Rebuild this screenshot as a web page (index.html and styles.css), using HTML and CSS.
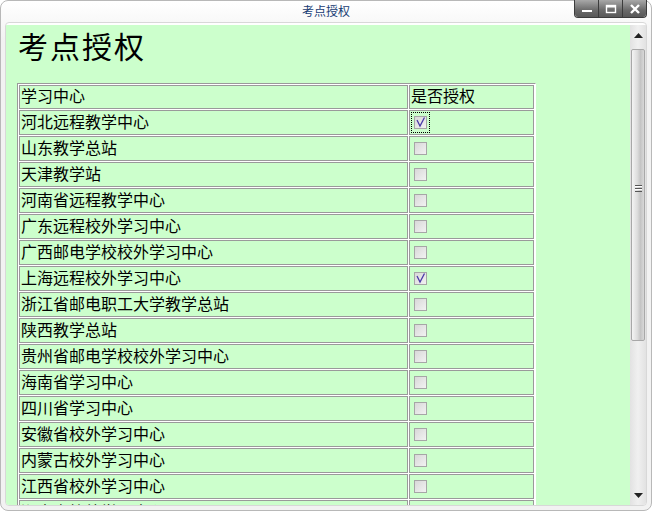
FILE: index.html
```html
<!DOCTYPE html>
<html>
<head>
<meta charset="utf-8">
<link rel="stylesheet" href="styles.css">
</head>
<body>
<div class="window">
  <div class="titlebar">
    <span class="title">考点授权</span>
    <div class="winbtns">
      <span class="wbtn"><svg width="12" height="10" viewBox="0 0 12 10"><rect x="1" y="6" width="10" height="2" fill="#fff"/></svg></span>
      <span class="wbtn"><svg width="12" height="10" viewBox="0 0 12 10"><rect x="1.5" y="1.5" width="9" height="7" fill="none" stroke="#fff" stroke-width="1.4"/><rect x="1" y="1" width="10" height="2.5" fill="#fff"/></svg></span>
      <span class="wbtn"><svg width="12" height="10" viewBox="0 0 12 10"><path d="M2 1 L10 9 M10 1 L2 9" stroke="#fff" stroke-width="2.4"/></svg></span>
    </div>
  </div>
  <div class="panel">
    <div class="content">
      <h1 class="heading">考点授权</h1>
      <table class="grid">
        <tr class="head"><td class="c1"><div class="cell">学习中心</div></td><td class="c2"><div class="cell">是否授权</div></td></tr>
        <tr><td class="c1"><div class="cell">河北远程教学中心</div></td><td class="c2"><div class="cell cbcell"><span class="focus"><span class="cb on"><svg width="11" height="11" viewBox="0 0 11 11"><path d="M2 3 L5 9 L9.5 0.5" fill="none" stroke="#4a3aa8" stroke-width="1.3"/></svg></span></span></div></td></tr>
        <tr><td class="c1"><div class="cell">山东教学总站</div></td><td class="c2"><div class="cell cbcell"><span class="pad"><span class="cb"></span></span></div></td></tr>
        <tr><td class="c1"><div class="cell">天津教学站</div></td><td class="c2"><div class="cell cbcell"><span class="pad"><span class="cb"></span></span></div></td></tr>
        <tr><td class="c1"><div class="cell">河南省远程教学中心</div></td><td class="c2"><div class="cell cbcell"><span class="pad"><span class="cb"></span></span></div></td></tr>
        <tr><td class="c1"><div class="cell">广东远程校外学习中心</div></td><td class="c2"><div class="cell cbcell"><span class="pad"><span class="cb"></span></span></div></td></tr>
        <tr><td class="c1"><div class="cell">广西邮电学校校外学习中心</div></td><td class="c2"><div class="cell cbcell"><span class="pad"><span class="cb"></span></span></div></td></tr>
        <tr><td class="c1"><div class="cell">上海远程校外学习中心</div></td><td class="c2"><div class="cell cbcell"><span class="pad"><span class="cb on"><svg width="11" height="11" viewBox="0 0 11 11"><path d="M2 3 L5 9 L9.5 0.5" fill="none" stroke="#4a3aa8" stroke-width="1.3"/></svg></span></span></div></td></tr>
        <tr><td class="c1"><div class="cell">浙江省邮电职工大学教学总站</div></td><td class="c2"><div class="cell cbcell"><span class="pad"><span class="cb"></span></span></div></td></tr>
        <tr><td class="c1"><div class="cell">陕西教学总站</div></td><td class="c2"><div class="cell cbcell"><span class="pad"><span class="cb"></span></span></div></td></tr>
        <tr><td class="c1"><div class="cell">贵州省邮电学校校外学习中心</div></td><td class="c2"><div class="cell cbcell"><span class="pad"><span class="cb"></span></span></div></td></tr>
        <tr><td class="c1"><div class="cell">海南省学习中心</div></td><td class="c2"><div class="cell cbcell"><span class="pad"><span class="cb"></span></span></div></td></tr>
        <tr><td class="c1"><div class="cell">四川省学习中心</div></td><td class="c2"><div class="cell cbcell"><span class="pad"><span class="cb"></span></span></div></td></tr>
        <tr><td class="c1"><div class="cell">安徽省校外学习中心</div></td><td class="c2"><div class="cell cbcell"><span class="pad"><span class="cb"></span></span></div></td></tr>
        <tr><td class="c1"><div class="cell">内蒙古校外学习中心</div></td><td class="c2"><div class="cell cbcell"><span class="pad"><span class="cb"></span></span></div></td></tr>
        <tr><td class="c1"><div class="cell">江西省校外学习中心</div></td><td class="c2"><div class="cell cbcell"><span class="pad"><span class="cb"></span></span></div></td></tr>
        <tr><td class="c1"><div class="cell">湖南省校外学习中心</div></td><td class="c2"><div class="cell cbcell"><span class="pad"><span class="cb"></span></span></div></td></tr>
      </table>
    </div>
    <div class="scrollbar">
      <div class="arrow up"><svg width="9" height="5" viewBox="0 0 9 5"><path d="M0 5 L4.5 0 L9 5 Z" fill="#222"/></svg></div>
      <div class="track">
        <div class="thumb"><span class="grip"></span></div>
      </div>
      <div class="arrow down"><svg width="9" height="5" viewBox="0 0 9 5"><path d="M0 0 L4.5 5 L9 0 Z" fill="#222"/></svg></div>
    </div>
  </div>
</div>
</body>
</html>
```

FILE: styles.css
```css
html, body {
  margin: 0;
  padding: 0;
  background: #ffffff;
}
body {
  width: 652px;
  height: 513px;
  overflow: hidden;
  font-family: "Noto Sans CJK SC", "Liberation Sans", sans-serif;
}
.window {
  box-sizing: border-box;
  width: 652px;
  height: 511px;
  border: 1px solid #b8b8b8;
  border-radius: 8px;
  background: linear-gradient(#ffffff, #f2f2f2 40px, #f2f2f2);
  display: flex;
  flex-direction: column;
  padding: 0 4px 4px 4px;
}
.titlebar {
  height: 21px;
  display: flex;
  justify-content: center;
  align-items: center;
  position: relative;
  flex: none;
}
.title {
  font-size: 12px;
  color: #173c74;
  line-height: 16px;
  margin-top: -2px;
}
.winbtns {
  position: absolute;
  right: 0;
  top: -1px;
  display: flex;
  border: 1px solid #3c3c3c;
  border-top: none;
  border-radius: 0 0 4px 4px;
  overflow: hidden;
}
.wbtn {
  width: 23px;
  height: 17px;
  display: flex;
  align-items: center;
  justify-content: center;
  background: linear-gradient(#a8a8a8, #6a6a6a 60%, #585858);
  border-left: 1px solid #3c3c3c;
}
.wbtn:first-child { border-left: none; }
.panel {
  flex: 1;
  display: flex;
  border: 1px solid #d8d8d8;
  border-radius: 4px;
  background: #fff;
  padding: 2px 0 0 0;
  overflow: hidden;
  min-height: 0;
}
.content {
  flex: 1;
  background: #ccffcc;
  padding: 0 0 0 11px;
}
.heading {
  margin: -2px 0 -4px 0;
  font-size: 30px;
  font-weight: normal;
  line-height: 44px;
  color: #000;
  letter-spacing: 2px;
  padding-left: 1px;
}
.grid {
  margin-top: 20px;
  border-collapse: separate;
  border-spacing: 1px;
  background: #ffffff;
  border-top: 1px solid #9a9a9a;
  border-left: 1px solid #9a9a9a;
  border-right: 1px solid #ffffff;
  border-bottom: 1px solid #ffffff;
  width: 519px;
}
.grid td {
  background: #ccffcc;
  border: 1px solid #9a9a9a;
  padding: 0;
  color: #000;
  white-space: nowrap;
}
.cell {
  box-sizing: border-box;
  height: 23px;
  display: flex;
  align-items: center;
  padding: 0 1px 4px 1px;
  font-size: 16px;
  line-height: 20px;
}
.cell.cbcell {
  padding-bottom: 0;
}
.head .cell {
  height: 22px;
}
.c1 { width: 387px; }
.c2 { width: 123px; }
.pad, .focus {
  display: flex;
  align-items: center;
  justify-content: center;
  width: 19px;
  height: 21px;
  box-sizing: border-box;
}
.focus {
  outline: 1px dotted #000;
  outline-offset: -1px;
}
.cb {
  box-sizing: border-box;
  width: 13px;
  height: 13px;
  border: 1px solid #a6a6a6;
  background: linear-gradient(135deg, #d8d8d8, #f2f2f2);
  display: flex;
  align-items: center;
  justify-content: center;
}
.cb svg { display: block; }
.scrollbar {
  width: 16px;
  flex: none;
  background: linear-gradient(90deg, #e2e2e2, #f0f0f0 50%, #e2e2e2);
  display: flex;
  flex-direction: column;
}
.arrow {
  height: 20px;
  display: flex;
  align-items: center;
  justify-content: center;
  flex: none;
}
.track {
  flex: 1;
  padding: 0 1px;
}
.thumb {
  height: 290px;
  margin-top: 4px;
  border: 1px solid #a8a8a8;
  border-radius: 2px;
  background: linear-gradient(90deg, #f4f4f4, #dcdcdc 45%, #c4c4c4 70%, #d8d8d8);
  display: flex;
  align-items: center;
  justify-content: center;
}
.grip {
  width: 7px;
  height: 7px;
  background: repeating-linear-gradient(#555 0 1px, #fff 1px 2px, transparent 2px 3px);
  position: relative;
  top: -7px;
}
```
